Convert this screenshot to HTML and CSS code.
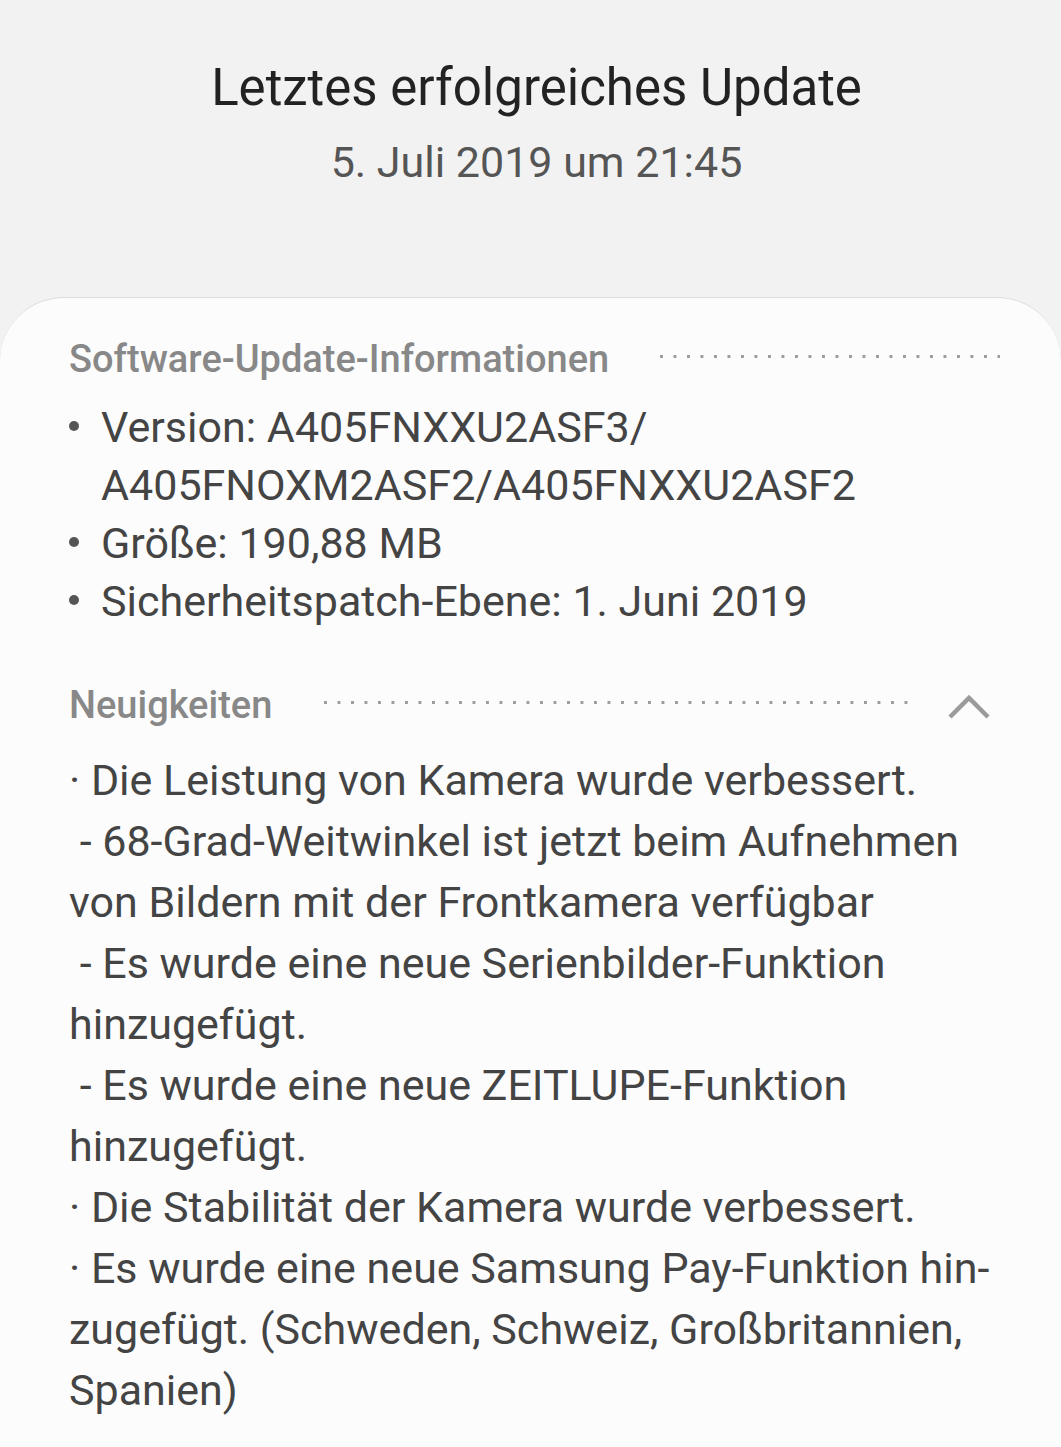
FILE: index.html
```html
<!DOCTYPE html>
<html lang="de">
<head>
<meta charset="utf-8">
<title>Software-Update</title>
<link rel="stylesheet" href="styles.css">
</head>
<body>
<header class="header">
  <h1 class="title">Letztes erfolgreiches Update</h1>
  <p class="date">5. Juli 2019 um 21:45</p>
</header>
<main class="card">
  <section class="section">
    <div class="section-head">
      <h2 class="section-title">Software-Update-Informationen</h2>
      <span class="dots"></span>
    </div>
    <ul class="info-list">
      <li class="info-item"><span class="bullet" aria-hidden="true"></span><span class="info-text">Version: A405FNXXU2ASF3/<br>A405FNOXM2ASF2/A405FNXXU2ASF2</span></li>
      <li class="info-item"><span class="bullet" aria-hidden="true"></span><span class="info-text">Größe: 190,88 MB</span></li>
      <li class="info-item"><span class="bullet" aria-hidden="true"></span><span class="info-text">Sicherheitspatch-Ebene: 1. Juni 2019</span></li>
    </ul>
  </section>
  <section class="section news">
    <div class="section-head">
      <h2 class="section-title">Neuigkeiten</h2>
      <span class="dots dots-short"></span>
      <svg class="chevron" width="44" height="28" viewBox="0 0 44 28" aria-hidden="true">
        <polyline points="3,24 22,5 41,24" fill="none" stroke="#9a9a9a" stroke-width="4.5"/>
      </svg>
    </div>
    <p class="news-text">· Die Leistung von Kamera wurde verbessert.<br>&nbsp;- 68-Grad-Weitwinkel ist jetzt beim Aufnehmen<br>von Bildern mit der Frontkamera verfügbar<br>&nbsp;- Es wurde eine neue Serienbilder-Funktion<br>hinzugefügt.<br>&nbsp;- Es wurde eine neue ZEITLUPE-Funktion<br>hinzugefügt.<br>· Die Stabilität der Kamera wurde verbessert.<br>· Es wurde eine neue Samsung Pay-Funktion hin-<br>zugefügt. (Schweden, Schweiz, Großbritannien,<br>Spanien)</p>
  </section>
</main>
</body>
</html>
```

FILE: styles.css
```css
html, body {
  margin: 0;
  padding: 0;
}
body {
  background: #f2f2f2;
  font-family: Roboto, "Liberation Sans", sans-serif;
  width: 1061px;
  height: 1447px;
  overflow: hidden;
}
.header {
  text-align: center;
  padding-top: 56px;
  padding-left: 12px;
  height: 241px;
}
.title {
  margin: 0;
  font-weight: 400;
  font-size: 51px;
  line-height: 64px;
  color: #222;
}
.date {
  margin: 14px 0 0;
  font-size: 43px;
  line-height: 56px;
  color: #555;
}
.card {
  background: #fcfcfc;
  border-top: 1.5px solid #dcdcdc;
  border-radius: 64px 64px 0 0;
  padding: 36px 61px 40px 69px;
  min-height: 1100px;
  box-sizing: border-box;
}
.section-head {
  display: flex;
  align-items: center;
  height: 50px;
}
.section-title {
  margin: 0;
  font-size: 38px;
  font-weight: 500;
  color: #888;
  white-space: nowrap;
}
.dots {
  flex: 1;
  height: 3px;
  margin-left: 51px;
  margin-top: -6px;
  background: linear-gradient(to right, #9c9c9c 3px, transparent 3px) 0 0 / 13.5px 3px repeat-x;
}
.dots-short {
  margin-left: 52px;
  margin-right: 38px;
  flex: 1;
}
.chevron {
  display: block;
  margin-right: 9px;
  margin-top: 4px;
}
.info-list {
  list-style: none;
  margin: 14px 0 0;
  padding: 0;
}
.info-item {
  display: flex;
  align-items: flex-start;
  font-size: 43px;
  line-height: 58px;
  color: #444;
}
.bullet {
  flex: none;
  width: 10px;
  height: 10px;
  margin: 23px 22px 0 0;
  border-radius: 50%;
  background: #555;
}
.news {
  margin-top: 50px;
}
.news-text {
  margin: 20px 0 0;
  font-size: 43px;
  line-height: 61px;
  color: #444;
  white-space: nowrap;
}
```
